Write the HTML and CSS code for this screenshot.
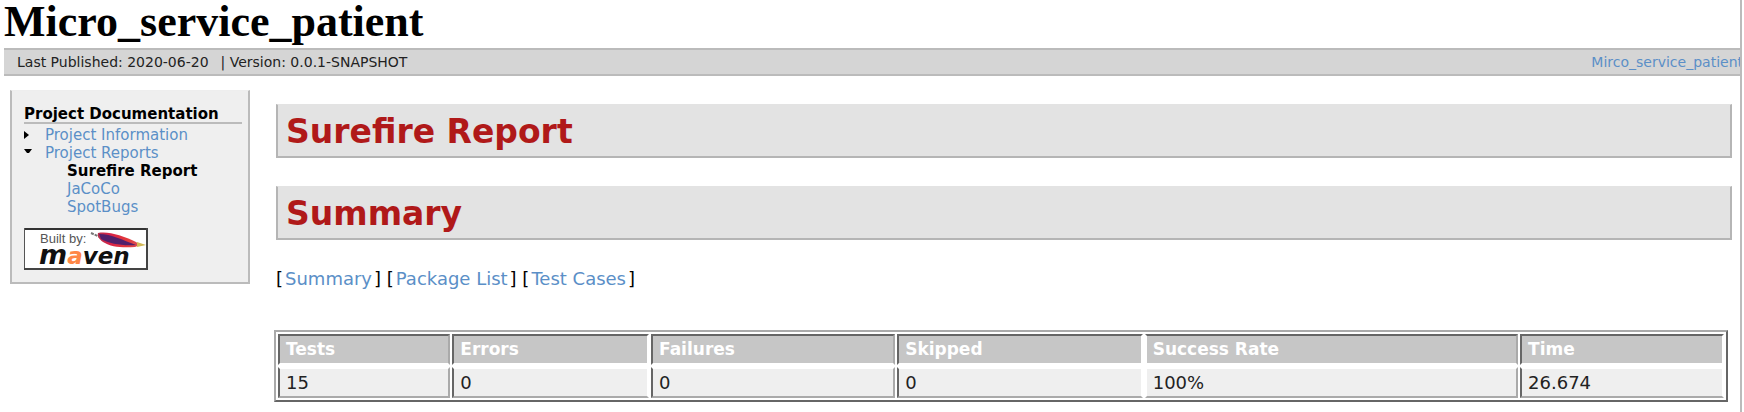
FILE: index.html
```html
<!DOCTYPE html>
<html lang="en">
<head>
<meta charset="utf-8">
<title>Surefire Report</title>
<link rel="stylesheet" href="styles.css">
</head>
<body>
<div class="page">
  <header>
    <h1 class="site-title">Micro_service_patient</h1>
    <div class="breadcrumbs">
      <div class="published"><span>Last Published: 2020-06-20</span><span>| Version: 0.0.1-SNAPSHOT</span></div>
      <a class="project-link" href="#">Mirco_service_patient</a>
    </div>
  </header>
  <div class="columns">
    <nav class="sidebar">
      <h2 class="nav-title">Project Documentation</h2>
      <ul class="nav-list">
        <li><svg class="marker" viewBox="0 0 8 8" aria-hidden="true"><path d="M0 0 5 4 0 8z"/></svg><a href="#">Project Information</a></li>
        <li><svg class="marker" viewBox="0 0 8 8" aria-hidden="true"><path d="M0 0H8L5 4H3z"/></svg><a href="#">Project Reports</a></li>
        <li class="child"><strong>Surefire Report</strong></li>
        <li class="child"><a href="#">JaCoCo</a></li>
        <li class="child"><a href="#">SpotBugs</a></li>
      </ul>
      <a class="built-by" href="#" aria-label="Built by Maven">
        <svg viewBox="0 0 124 42" role="img">
          <defs>
            <linearGradient id="feather" x1="0" x2="1" y1="0" y2="0">
              <stop offset="0" stop-color="#b8304c"/><stop offset=".3" stop-color="#d92248"/><stop offset=".7" stop-color="#e33a3a"/><stop offset="1" stop-color="#d8505a"/>
            </linearGradient>
          </defs>
          <rect width="124" height="42" fill="#fff"/>
          <path d="M0 1H124" stroke="#333" stroke-width="2"/>
          <path d="M.5 0V42" stroke="#555"/>
          <path d="M123 0V42M0 41H124" stroke="#444" stroke-width="2"/>
          <text class="built-text" x="16" y="15">Built by:</text>
          <path d="M67 5 76 9" stroke="#777" stroke-width="2" stroke-dasharray="3 1"/>
          <path d="M74 5C85 3 99 8 112 14L116 17 111 19C98 20 87 19 79 14 75 11 73 8 74 5Z" fill="url(#feather)"/>
          <path d="M75 6C88 6 98 12 112 17 99 18 86 16 77 11Z" fill="#51206b"/>
          <path d="M113 14 122 17 113 19Z" fill="#d2b956"/>
          <text class="maven-text" x="15" y="36"><tspan class="maven-m">m</tspan><tspan fill="#ff8746">a</tspan>ven</text>
        </svg>
      </a>
    </nav>
    <main class="content">
      <h2 class="section-title">Surefire Report</h2>
      <h2 class="section-title">Summary</h2>
      <p class="jump-links">[<a href="#">Summary</a>] [<a href="#">Package List</a>] [<a href="#">Test Cases</a>]</p>
      <table class="results">
        <colgroup><col class="c-tests"><col class="c-errors"><col class="c-failures"><col class="c-skipped"><col class="c-rate"><col class="c-time"></colgroup>
        <thead>
          <tr><th>Tests</th><th class="open">Errors</th><th>Failures</th><th class="open">Skipped</th><th class="bare">Success Rate</th><th class="open">Time</th></tr>
        </thead>
        <tbody>
          <tr><td>15</td><td class="open">0</td><td>0</td><td class="open">0</td><td class="bare">100%</td><td class="open">26.674</td></tr>
        </tbody>
      </table>
    </main>
  </div>
</div>
</body>
</html>
```
FILE: styles.css
```css
* { box-sizing: border-box; }
body {
  margin: 0;
  background: #fff;
  color: #000;
  font-family: "DejaVu Sans", Verdana, sans-serif;
  font-size: 15px;
}
a { color: #5b8fc7; text-decoration: none; }
.page {
  min-height: 100vh;
  margin-right: 2px;
  padding-left: 4px;
  border-right: 2px solid #bbb;
  overflow: hidden;
}
.site-title {
  margin: 0;
  height: 48px;
  font: bold 44px/44px "Liberation Serif", "Times New Roman", serif;
}
.breadcrumbs {
  display: flex;
  justify-content: space-between;
  align-items: center;
  height: 28px;
  padding-left: 13px;
  border: solid #bbb;
  border-width: 2px 0;
  background: #d5d5d5;
  white-space: nowrap;
  font-size: 14px;
  overflow: hidden;
}
.published { display: flex; gap: 12px; color: #222; }
.project-link { margin-right: -3px; }
.columns { display: flex; align-items: flex-start; gap: 26px; padding: 14px 8px 0 6px; }
.sidebar {
  flex: 0 0 240px;
  padding: 15px 6px 12px 12px;
  border: 2px solid #bbb;
  border-top: 1px solid #eee;
  background: #efefef;
}
.nav-title {
  margin: 0 0 2px;
  border-bottom: 2px solid #bbb;
  font-size: 15px;
  line-height: 16px;
}
.nav-list { margin: 0 0 12px; padding: 0; list-style: none; line-height: 18px; }
.nav-list li { display: flex; align-items: center; }
.marker { width: 8px; height: 8px; margin-right: 13px; }
.nav-list .child { padding-left: 43px; }
.built-by { display: block; width: 124px; }
.built-by svg { display: block; width: 100%; }
.built-text { font: 13px "Liberation Sans", sans-serif; fill: #555; }
.maven-text { font: italic bold 23px "DejaVu Sans", sans-serif; fill: #111; }
.maven-m { font-size: 27px; }
.content { flex: 1; min-width: 0; padding-top: 14px; }
.section-title {
  margin: 0 0 28px;
  padding: 2px 9px 0 8px;
  border: 2px solid #b5b5b5;
  border-top: 1px solid #e3e3e3;
  background: #e3e3e3;
  color: #b01919;
  font-size: 33px;
  line-height: 49px;
}
.jump-links { margin: 0 0 40px; font-size: 18px; line-height: 22px; }
.jump-links a { padding: 0 2px; }
.results {
  width: calc(100% - 2px);
  margin-left: -2px;
  table-layout: fixed;
  border: 2px solid #aaa;
  border-right-color: #666;
  border-bottom-color: #666;
  border-spacing: 2px;
  font-size: 17px;
  line-height: 23px;
}
.results th, .results td { padding: 2px 6px; text-align: left; border: 2px solid #aaa; border-left-color: #666; }
.results th { background: #c6c6c6; color: #fff; border-top-color: #666; border-bottom-color: #fff; }
.results td { background: #efefef; border-top-color: #fff; color: #222; font-size: 18px; }
.results .open { border-right-color: #fff; }
.results .bare { border-left-color: #fff; }
.c-tests { width: 12%; }
.c-errors { width: 13.7%; }
.c-failures { width: 17%; }
.c-skipped { width: 17.1%; }
.c-rate { width: 26%; }
.c-time { width: 14.2%; }
```
